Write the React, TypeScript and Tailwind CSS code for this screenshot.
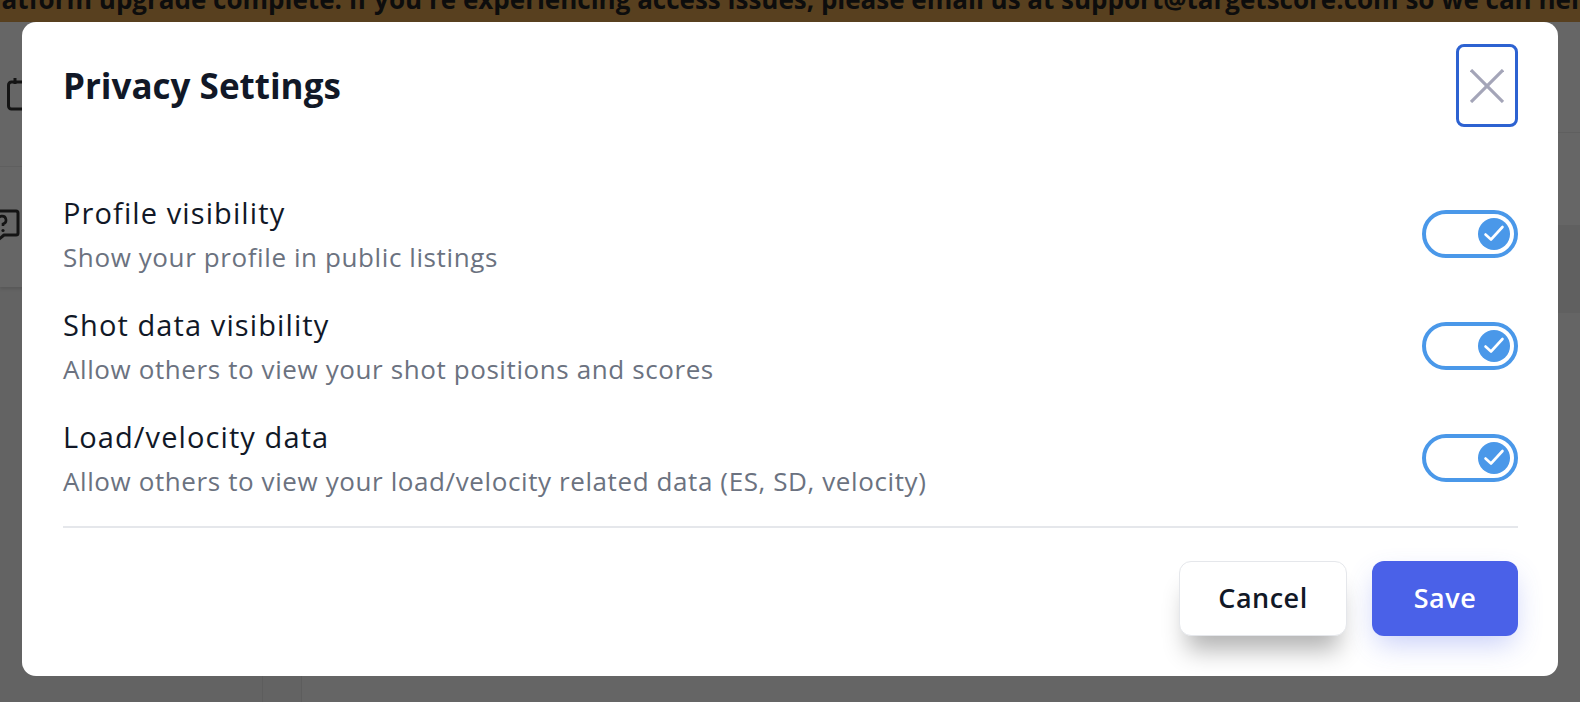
import { useState } from 'react';

type Setting = {
  id: string;
  label: string;
  description: string;
};

const settings: Setting[] = [
  {
    id: 'profile',
    label: 'Profile visibility',
    description: 'Show your profile in public listings',
  },
  {
    id: 'shots',
    label: 'Shot data visibility',
    description: 'Allow others to view your shot positions and scores',
  },
  {
    id: 'load',
    label: 'Load/velocity data',
    description:
      'Allow others to view your load/velocity related data (ES, SD, velocity)',
  },
];

function Toggle({ on, onClick }: { on: boolean; onClick: () => void }) {
  return (
    <button
      onClick={onClick}
      className={`flex h-[48px] w-[96px] shrink-0 items-center rounded-full border-4 border-[#4a98e9] bg-white px-[4px] ${
        on ? 'justify-end' : 'justify-start'
      }`}
    >
      <span className="flex h-8 w-8 items-center justify-center rounded-full bg-[#4a98e9]">
        {on && (
          <svg width="32" height="32" viewBox="0 0 32 32" fill="none">
            <polyline
              points="7.5,16.5 13,21.5 24.5,9"
              stroke="white"
              strokeWidth="2.6"
              strokeLinecap="round"
              strokeLinejoin="round"
            />
          </svg>
        )}
      </span>
    </button>
  );
}

export default function App() {
  const [values, setValues] = useState<Record<string, boolean>>({
    profile: true,
    shots: true,
    load: true,
  });

  return (
    <div className="relative h-[702px] w-[1580px] overflow-hidden bg-[#636363] font-['Open_Sans','Noto_Sans',sans-serif]">
      {/* Banner (dimmed by overlay) */}
      <div className="flex h-[22px] justify-center overflow-hidden bg-[#58401f]">
        <p className="mt-[-16px] shrink-0 whitespace-nowrap text-[26px] font-bold leading-[30px] text-[#0d0d0d]">
          Platform upgrade complete. If you're experiencing access issues,
          please email us at support@targetscore.com so we can help.
        </p>
      </div>

      {/* Page behind the modal */}
      <div className="flex h-[680px]">
        <aside className="w-[263px] border-r border-[#5d5d5d]">
          <div className="bg-[#666666] shadow-[0_2px_3px_rgba(0,0,0,0.12)]">
            <div className="flex h-[145px] items-center border-b border-[#5f5f5f] pl-[7px]">
              <svg width="28" height="34" viewBox="0 0 28 34" fill="none">
                <rect
                  x="1.5"
                  y="5"
                  width="25"
                  height="27"
                  rx="3"
                  stroke="#141414"
                  strokeWidth="3"
                />
                <line x1="8" y1="1" x2="8" y2="7" stroke="#141414" strokeWidth="3" />
              </svg>
            </div>
            <div className="flex h-[120px] items-center">
              <svg width="20" height="38" viewBox="0 0 20 38" fill="none">
                <path
                  d="M-6 3h22a2 2 0 0 1 2 2v20a2 2 0 0 1-2 2H4l-6 5"
                  stroke="#141414"
                  strokeWidth="3"
                  strokeLinejoin="round"
                />
                <path
                  d="M-2 12a4 4 0 1 1 5 4v2"
                  stroke="#141414"
                  strokeWidth="2.6"
                />
                <circle cx="3" cy="22.5" r="1.6" fill="#141414" />
              </svg>
            </div>
          </div>
        </aside>
        <div className="w-[39px] border-r border-[#5d5d5d]" />
        <main className="flex-1">
          <div className="h-[111px] border-b border-[#5f5f5f] bg-[#666666]" />
          <div className="h-[92px] bg-[#666666]" />
          <div className="h-[88px] bg-[#606060]" />
          <div className="h-[389px] bg-[#656565]" />
        </main>
      </div>

      {/* Modal */}
      <div className="absolute left-[22px] top-[22px] flex h-[654px] w-[1536px] flex-col rounded-[14px] bg-white pl-[41px] pr-[40px] pt-[22px]">
        <div className="flex h-[83px] items-center justify-between">
          <h2 className="text-[35px] font-bold leading-[35px] text-[#111827]">
            Privacy Settings
          </h2>
          <button className="flex h-[83px] w-[62px] items-center justify-center rounded-[8px] border-[3px] border-[#2d62d1]">
            <svg width="34" height="34" viewBox="0 0 34 34" fill="none">
              <line x1="1" y1="1" x2="33" y2="33" stroke="#a4a5b8" strokeWidth="3.2" />
              <line x1="33" y1="1" x2="1" y2="33" stroke="#a4a5b8" strokeWidth="3.2" />
            </svg>
          </button>
        </div>

        <div className="mt-[51px]">
          {settings.map((s) => (
            <div key={s.id} className="flex h-[112px] items-center justify-between">
              <div>
                <p className="text-[29px] font-medium leading-[36px] tracking-[1.1px] text-[#111827]">
                  {s.label}
                </p>
                <p className="mt-[10px] text-[26px] leading-[32px] tracking-[0.6px] text-[#6b7280]">
                  {s.description}
                </p>
              </div>
              <Toggle
                on={values[s.id]}
                onClick={() => setValues((v) => ({ ...v, [s.id]: !v[s.id] }))}
              />
            </div>
          ))}
        </div>

        <div className="mt-[12px] h-[2px] bg-[#e5e7eb]" />

        <div className="mt-[33px] flex justify-end gap-[25px]">
          <button className="h-[75px] w-[168px] rounded-[12px] border border-[#e5e7eb] bg-white text-[27px] font-semibold tracking-[0.5px] text-[#111827] shadow-[0_22px_25px_-8px_rgba(0,0,0,0.3)]">
            Cancel
          </button>
          <button className="h-[75px] w-[146px] rounded-[12px] bg-[#4a61e8] text-[27px] font-semibold tracking-[0.5px] text-white shadow-[0_12px_28px_-4px_rgba(74,97,232,0.3)]">
            Save
          </button>
        </div>
      </div>
    </div>
  );
}
